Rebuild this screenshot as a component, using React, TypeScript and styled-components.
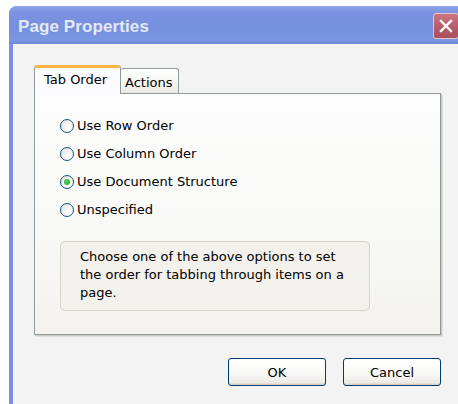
import React, { useState } from 'react';
import styled, { createGlobalStyle, css } from 'styled-components';

const GlobalStyle = createGlobalStyle`
	html, body {
		margin: 0;
		padding: 0;
		background: #ffffff;
		overflow: hidden;
	}
	body {
		font-family: 'DejaVu Sans', Tahoma, sans-serif;
		font-size: 13px;
		color: #000000;
	}
`;

const Page = styled.div`
	width: 458px;
	height: 404px;
	padding: 6px 0 0 9px;
	box-sizing: border-box;
	overflow: hidden;
`;

const Window = styled.div`
	display: flex;
	flex-direction: column;
	width: 451px;
	height: 398px;
	border-top-left-radius: 8px;
	overflow: hidden;
	background: #7c8fe0;
`;

const TitleBar = styled.div`
	display: flex;
	align-items: center;
	height: 38px;
	padding-left: 9px;
	flex-shrink: 0;
	background: linear-gradient(180deg, #8ea3e8 0%, #7a92e0 18%, #7590de 60%, #7b97e2 90%, #6f85d6 100%);
`;

const Title = styled.div`
	font-family: 'Liberation Sans', Arial, sans-serif;
	font-weight: bold;
	font-size: 17px;
	color: #e3e9f9;
	flex: 1;
	margin-top: 4px;
	letter-spacing: 0.1px;
`;

const CloseButton = styled.div`
	display: flex;
	align-items: center;
	justify-content: center;
	width: 26px;
	height: 26px;
	margin-right: 1px;
	margin-top: 2px;
	box-sizing: border-box;
	border: 1px solid #e7c4cb;
	border-radius: 3px;
	background: linear-gradient(180deg, #c97682 0%, #b65a69 60%, #a94f5e 100%);
`;

const Body = styled.div`
	flex: 1;
	display: flex;
	flex-direction: column;
	margin-left: 4px;
	padding: 21px 0 0 21px;
	background: #f3f3f3;
`;

const TabStrip = styled.div`
	display: flex;
	align-items: flex-end;
	height: 28px;
	position: relative;
	z-index: 1;
`;

const Tab = styled.div<{ $active?: boolean }>`
	display: flex;
	align-items: center;
	box-sizing: border-box;
	border: 1px solid #919b9c;
	border-bottom: none;
	border-radius: 3px 3px 0 0;
	${(p) =>
		p.$active
			? css`
					width: 87px;
					height: 29px;
					padding: 0 0 3px 9px;
					background: #fcfcfe;
					border-top: 3px solid #f8b640;
					margin-bottom: -1px;
			  `
			: css`
					width: 58px;
					height: 25px;
					padding: 2px 0 0 4px;
					background: linear-gradient(180deg, #ffffff 0%, #f3f3ef 70%, #e9e8e0 100%);
					border-left: none;
			  `}
`;

const Panel = styled.div`
	width: 407px;
	height: 242px;
	box-sizing: border-box;
	border: 1px solid #919b9c;
	box-shadow: 1px 1px 0 #c9cbc3, 2px 2px 0 #e2e2dc;
	background: linear-gradient(180deg, #fdfdfd 0%, #f8f8f6 60%, #f3f2ed 100%);
	padding: 23px 0 0 25px;
	display: flex;
	flex-direction: column;
`;

const Options = styled.div`
	display: flex;
	flex-direction: column;
	gap: 10px;
`;

const OptionRow = styled.label`
	display: flex;
	align-items: center;
	height: 18px;
	gap: 3px;
	cursor: default;
`;

const RadioDot = styled.span<{ $checked: boolean }>`
	display: flex;
	align-items: center;
	justify-content: center;
	width: 14px;
	height: 14px;
	box-sizing: border-box;
	border-radius: 50%;
	border: 1px solid #1d5281;
	background: radial-gradient(circle at 65% 70%, #ffffff 0%, #f4f4f0 40%, #d9dbd6 100%);
	&::after {
		content: '';
		width: 6px;
		height: 6px;
		border-radius: 50%;
		background: ${(p) => (p.$checked ? 'radial-gradient(circle at 40% 40%, #55d35e, #21a121)' : 'transparent')};
	}
`;

const OptionText = styled.span`
	font-size: 13px;
	line-height: 18px;
`;

const Hint = styled.div`
	width: 310px;
	height: 70px;
	box-sizing: border-box;
	margin: 22px 0 0 0;
	padding: 6px 0 0 19px;
	border: 1px solid #d6d4c8;
	border-radius: 5px;
	background: #f2f1ec;
	font-size: 13px;
	line-height: 18px;
`;

const ButtonRow = styled.div`
	display: flex;
	gap: 17px;
	width: 407px;
	justify-content: flex-end;
	margin-top: 23px;
`;

const Button = styled.button`
	width: 98px;
	height: 28px;
	box-sizing: border-box;
	border: 1px solid #003c74;
	border-radius: 3px;
	background: linear-gradient(180deg, #ffffff 0%, #f8f8f5 55%, #ecebe5 90%, #d6d0c5 100%);
	box-shadow: inset 0 -1px 0 #d6d0c5;
	font-family: 'DejaVu Sans', Tahoma, sans-serif;
	font-size: 13px;
	color: #000000;
	padding: 0;
`;

const options = ['Use Row Order', 'Use Column Order', 'Use Document Structure', 'Unspecified'];

export default function App() {
	const [selected, setSelected] = useState(2);

	return (
		<>
			<GlobalStyle />
			<Page>
				<Window>
					<TitleBar>
						<Title>Page Properties</Title>
						<CloseButton>
							<svg width="14" height="14" viewBox="0 0 14 14">
								<path d="M2 2 L12 12 M12 2 L2 12" stroke="#ffffff" strokeWidth="2.4" strokeLinecap="square" />
							</svg>
						</CloseButton>
					</TitleBar>
					<Body>
						<TabStrip>
							<Tab $active>Tab Order</Tab>
							<Tab>Actions</Tab>
						</TabStrip>
						<Panel>
							<Options>
								{options.map((label, i) => (
									<OptionRow key={label} onClick={() => setSelected(i)}>
										<RadioDot $checked={selected === i} />
										<OptionText>{label}</OptionText>
									</OptionRow>
								))}
							</Options>
							<Hint>
								Choose one of the above options to set
								<br />
								the order for tabbing through items on a
								<br />
								page.
							</Hint>
						</Panel>
						<ButtonRow>
							<Button>OK</Button>
							<Button>Cancel</Button>
						</ButtonRow>
					</Body>
				</Window>
			</Page>
		</>
	);
}
